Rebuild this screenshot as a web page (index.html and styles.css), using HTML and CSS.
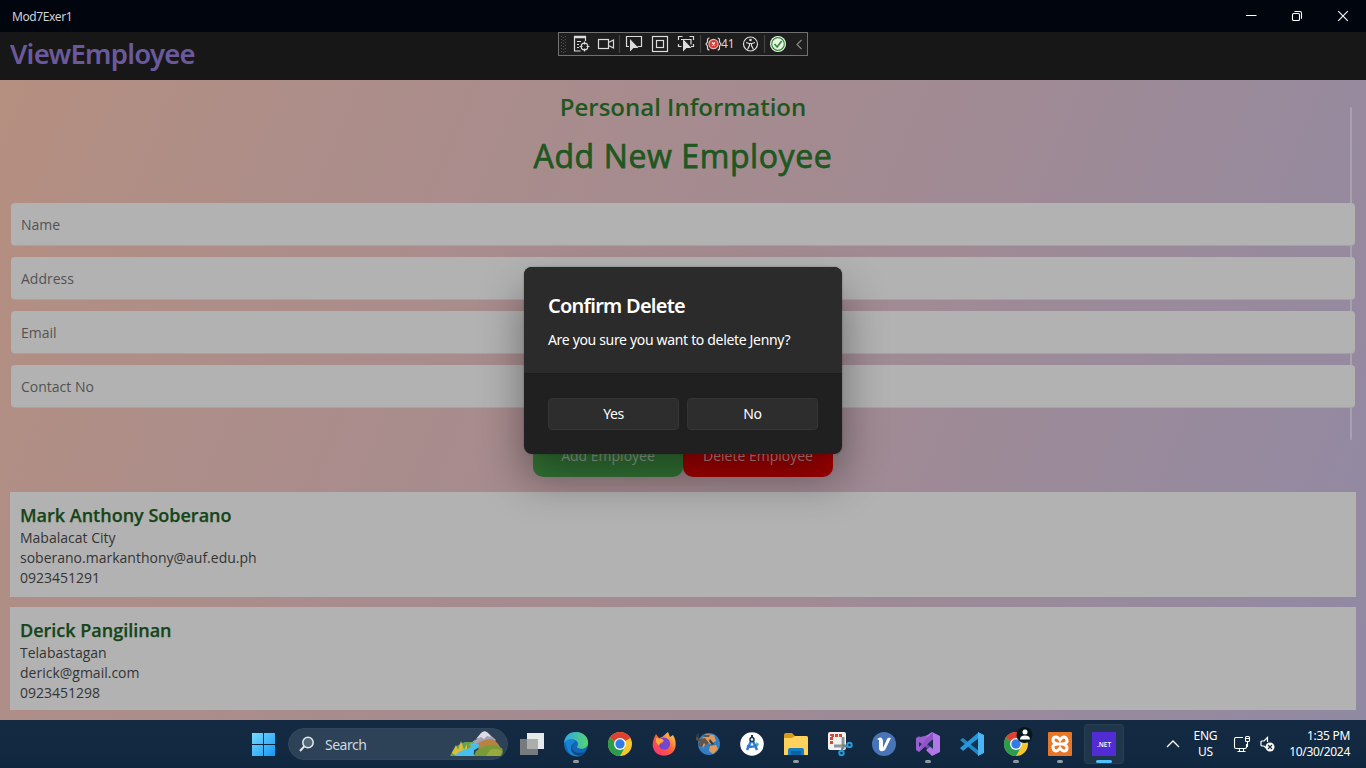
FILE: index.html
```html
<!DOCTYPE html>
<html lang="en">
<head>
<meta charset="utf-8">
<title>Mod7Exer1</title>
<link rel="stylesheet" href="styles.css">
</head>
<body>
<div class="desktop">
  <header class="titlebar">
    <span class="app-name">Mod7Exer1</span>
    <svg class="window-controls" width="138" height="32" viewBox="0 0 138 32" fill="none" stroke="#fff" stroke-width="1.1">
      <path d="M18 15.5h10.5M110.200 11.2l9.6 9.6M119.800 11.2l-9.6 9.6"/>
      <rect x="64.5" y="13.5" width="7" height="7" rx="1.3"/>
      <path d="M66.5 11.5h5.3q1.7 0 1.7 1.7v5.6"/>
    </svg>
  </header>
  <div class="navbar"><h1 class="nav-title">ViewEmployee</h1></div>

  <main class="page">
    <h2 class="section-title">Personal Information</h2>
    <h3 class="form-title">Add New Employee</h3>
    <div class="fields">
      <div class="field"><span>Name</span></div>
      <div class="field"><span>Address</span></div>
      <div class="field"><span>Email</span></div>
      <div class="field"><span>Contact No</span></div>
    </div>
    <div class="actions">
      <div class="action add"><span>Add Employee</span></div>
      <div class="action delete"><span>Delete Employee</span></div>
    </div>
    <div class="cards">
      <article class="card first">
        <h4><span>Mark Anthony Soberano</span></h4>
        <p><span>Mabalacat City</span></p><p><span>soberano.markanthony@auf.edu.ph</span></p><p><span>0923451291</span></p>
      </article>
      <article class="card">
        <h4><span>Derick Pangilinan</span></h4>
        <p><span>Telabastagan</span></p><p><span>derick@gmail.com</span></p><p><span>0923451298</span></p>
      </article>
    </div>
    <i class="scroll-thumb"></i>
  </main>

  <div class="debug-toolbar">
    <svg width="250" height="24" viewBox="0 0 250 24" fill="none" stroke="#dcdcdc" stroke-width="1.2">
      <rect x=".5" y=".5" width="249" height="23" fill="#1e1e1e" stroke="#707070" stroke-width="1"/>
      <path d="M3.5 4v17M5.5 5v16M7.500 4v17" stroke="#555" stroke-dasharray="1 2" stroke-width="1"/>
      <path d="M16.500 4v15h6M27.500 4v5M19 9.500h4M19 12.500h2M19 15.500h2"/><path d="M16 5h12" stroke-width="2.500"/>
      <circle cx="26.500" cy="14.500" r="3.300"/><path d="M26.500 9.500v3M26.500 16.500v3M21.500 14.500h3M28.500 14.500h3"/>
      <rect x="40.500" y="7.500" width="10" height="9"/><path d="M50.500 10.500l5-2.500v8l-5-2.500"/>
      <path d="M61.500 3v18M142.500 3v18M206.500 3v18" stroke="#444"/>
      <path d="M71 14.500h-2.500v-10h15v10h-4"/><path d="M72 7v12.500l3.500-3.500h5z" fill="#dcdcdc" stroke="none"/>
      <rect x="94.500" y="4.500" width="15" height="15"/><rect x="98.500" y="8.500" width="7" height="7"/>
      <path d="M120.500 8V4.500h4M131.500 4.500h4V8M135.500 12v2.500H133M120.500 12v2.500h3M123 7.500h10v5"/><path d="M125 7v12.500l3.500-3.500h5z" fill="#dcdcdc" stroke="none"/>
      <path d="M151.500 6q-2 0-2 2v2l-1.500 2 1.500 2v2q0 2 2 2M159.500 6q2 0 2 2v2l1.500 2-1.500 2v2q0 2-2 2"/>
      <circle cx="155.500" cy="12" r="4.600" fill="#d83b32" stroke="#efb1aa"/><path d="M154 10.500l3 3m0-3l-3 3" stroke="#fff"/>
      <circle cx="192.500" cy="12" r="7"/><circle cx="192.500" cy="8" r="1.300" fill="#dcdcdc" stroke="none"/><path d="M188 10.500l3 1h3l3-1M191.500 11.500v2l-2 4M193.500 11.500v2l2 4"/>
      <circle cx="220" cy="12" r="8" fill="#e9f5e9" stroke="none"/><circle cx="220" cy="12" r="6.300" stroke="#388a34"/><path d="M216.500 12l2.700 3 4.500-6" stroke="#388a34" stroke-width="1.700"/>
      <path d="M243.500 8l-4.500 4.500 4.500 4.500" stroke="#888"/>
    </svg>
    <span class="debug-count">41</span>
  </div>

  <section class="dialog">
    <div class="dialog-body"><h5><span>Confirm Delete</span></h5><p><span>Are you sure you want to delete Jenny?</span></p></div>
    <div class="dialog-buttons"><div>Yes</div><div>No</div></div>
  </section>

  <footer class="taskbar">
    <svg class="start" width="24" height="24" viewBox="0 0 24 24">
      <defs><linearGradient id="win" x1="0" y1="0" x2="1" y2="1"><stop stop-color="#76dcff"/><stop offset="1" stop-color="#1696f4"/></linearGradient></defs>
      <path fill="url(#win)" d="M1 1h11v11H1zM13 1h11v11H13zM1 13h11v11H1zM13 13h11v11H13z"/>
    </svg>
    <div class="search">
      <svg width="18" height="18" viewBox="0 0 18 18" fill="#526779" stroke="#e4e9ed" stroke-width="1.500"><circle cx="10" cy="7.500" r="5.200"/><path d="M6.200 11.300L2 16" stroke-width="2"/></svg>
      <span>Search</span>
      <svg class="landscape" width="54" height="26" viewBox="0 0 54 26">
        <path d="M22 12q3-3 6-4l5-6q3-3 6 0l8 7-7 8H23z" fill="#a4a2b5"/><path d="M27 8l5-6q4-4 8 1l2 3-4-1-3 3-3-2z" fill="#dedbe4"/>
        <path d="M25 14q12-7 18-6 7 3 10 13l-15 3z" fill="#b78242"/><path d="M27 20q12-9 26-3 2 5-1 8H25z" fill="#769b38"/><path d="M41 19q6-3 12 1l-2 5H37z" fill="#98aa3e"/>
        <path d="M1 25q5-12 15-14h9l-8 14z" fill="#67a34b"/><path d="M3 22l4-8 2 5 3-9 3 9 3-6v9L8 25z" fill="#d8bd40"/><path d="M14 25l7-8 1-6 3 6v5z" fill="#a1ae40"/>
        <path d="M6 25q3-5 12-7 7-3 5-4l-4-1q10-2 11 1 0 3-5 5-2 2 1 6z" fill="#48bfec"/>
      </svg>
    </div>
    <div class="apps">
      <div class="app"><svg viewBox="0 0 28 28"><path d="M9 3h17v16H9z" fill="#e7e8e9"/><path d="M2 9h18v16H2z" fill="#777b7d"/><path d="M9 9h11v10H9z" fill="#adadad"/></svg></div>
      <div class="app running"><svg viewBox="0 0 28 28"><defs><linearGradient id="edge"><stop stop-color="#30a5e8"/><stop offset="1" stop-color="#54d66e"/></linearGradient></defs><circle cx="14" cy="14" r="12" fill="#1267b7"/><path d="M2 13C3 5 8 2 14 2c8 0 13 6 12 12-.600 4-6 6-10 4-2-1 0-2 0-4 0-4-8-7-14-1z" fill="url(#edge)"/><path d="M3 12c4-4 9-3 10 0-4 2-4 9 2 11 4 1 7 0 9-2-4 7-12 7-17 2" fill="#1683d4"/><path d="M12 13c-4 4-1 10 5 10 3 0 6-1 7-2-3 5-8 6-12 3-4-3-4-9 0-11z" fill="#17457f"/></svg></div>
      <div class="app"><svg viewBox="0 0 28 28"><g id="chrome-mark"><circle cx="14" cy="14" r="12" fill="#f7c52e"/><path d="M14 14L3.600 8A12 12 0 0 1 24.400 8H14z" fill="#df4033"/><path d="M14 14L3.600 8A12 12 0 0 0 14 26l5-9z" fill="#2b9c4c"/><path d="M14 8h10.400L19 11z" fill="#df4033"/><circle cx="14" cy="14" r="6" fill="#fff"/><circle cx="14" cy="14" r="4.700" fill="#327be6"/></g></svg></div>
      <div class="app"><svg viewBox="0 0 28 28"><defs><linearGradient id="fox" x1="0" y1="1" x2="1" y2="0"><stop stop-color="#f72b7e"/><stop offset=".55" stop-color="#ff6338"/><stop offset="1" stop-color="#ffe451"/></linearGradient></defs><path d="M4 8l2-4 3 4 3-1 6-5 2 5 3-2c5 8 3 18-5 20-10 3-17-5-15-13z" fill="url(#fox)"/><path d="M10 9c5-3 11 0 10 6-1 5-7 6-10 3-2-2-2-4 0-4l3-1z" fill="#7146d4"/><path d="M6 8l6 1 2 2-4 2-1 3-3-4zM17 3l2 6-3-2z" fill="#ffac38"/></svg></div>
      <div class="app"><svg viewBox="0 0 28 28"><circle cx="15" cy="14" r="11" fill="#347ebf"/><path d="M7 10l5-6 8 1 2 6-5 3-5-1-3 5zM16 16l6-1 2 4-5 5-4-3z" fill="#e09a59"/><path d="M3 4l3 5 5-1 4 5-3 2-2-2-2 4-4-2 2-4-4-1zM9 5h7l-1 2h-5z" fill="#65544b"/><path d="M2 5l3-2v7M16 9l4 5-2 1-3-4z" fill="#333b40"/></svg></div>
      <div class="app"><svg viewBox="0 0 28 28"><circle cx="14" cy="14" r="11.800" fill="#fff"/><path d="M14 9L9 20M14 9l5 11M9 16q5 2 10-1" fill="none" stroke="#2d79d9" stroke-width="2.500"/><circle cx="14" cy="9.500" r="2" fill="#fff" stroke="#17354d" stroke-width="1.500"/><path d="M14 5v3" stroke="#17354d" stroke-width="2"/><path d="M18 12l3 2-2 3z" fill="#39ba72"/></svg></div>
      <div class="app running"><svg viewBox="0 0 28 28"><path d="M2 5q0-2 2-2h6l3 3h11q2 0 2 2v6H2z" fill="#d79b17"/><path d="M2 8h8l3-2h11q2 0 2 2v17H2z" fill="#ffd35b"/><path d="M6 25v-5q0-2 2-2h12q2 0 2 2v5z" fill="#167cc1"/><path d="M9 21h10v4H9z" fill="#0f62a1"/></svg></div>
      <div class="app"><svg viewBox="0 0 28 28"><rect x="2" y="2" width="18" height="18" rx="2" fill="#f2f2f1"/><path d="M5.500 14V5.500H16" fill="none" stroke="#d24b31" stroke-width="3" stroke-dasharray="3 1"/><path d="M17 7v12M8 16h12" stroke="#8c969b" stroke-width="3"/><path d="M16 15l7 2M17 17l-2 5" stroke="#737e84" stroke-width="2"/><g fill="none" stroke="#289cdb" stroke-width="2"><circle cx="23.500" cy="15" r="2.200"/><circle cx="15.500" cy="23" r="2.200"/></g></svg></div>
      <div class="app"><svg viewBox="0 0 28 28"><circle cx="14" cy="14" r="12" fill="#4775b5"/><path d="M7 9q5-4 6 2v7l4-9q1-2 4-1l-6 12q-5 3-6-1V10z" fill="#fff"/></svg></div>
      <div class="app running"><svg viewBox="0 0 28 28"><path d="M2 8l3-2 14 12v5L2 10z" fill="#7343b6"/><path d="M2 8v12l3 2L19 9V4z" fill="#9961cf"/><path d="M5 12v5l3-3z" fill="#153450"/><path d="M18 2l8 4v16l-8 4-6-6 7-5v-5l-7-4z" fill="#b276e9"/><path d="M19 9v10l-6-5z" fill="#153450"/><path d="M5 22L19 9V2l-9 9z" fill="#8f54c5"/></svg></div>
      <div class="app"><svg viewBox="0 0 28 28"><path d="M2 10l3-2 16 13v5z" fill="#2387c6"/><path d="M2 18l3 3L21 8V2z" fill="#2699dd"/><path d="M20 2l6 3v18l-6 3z" fill="#4ab5f4"/><path d="M20 9v10l-7-5z" fill="#153450"/></svg></div>
      <div class="app running"><svg viewBox="0 0 28 28"><use href="#chrome-mark"/><circle cx="22.500" cy="5" r="8" fill="#05191d"/><circle cx="23" cy="2" r="2.500" fill="#fff"/><path d="M18 9.500q0-4 5-4t5 4z" fill="#fff"/></svg></div>
      <div class="app running"><svg viewBox="0 0 28 28"><rect x="2" y="2" width="24" height="24" rx="1" fill="#e87627"/><path d="M11 14q-4-1-4-4t3-3q2 0 4 3 2-3 4-3t3 3-4 4q4 1 4 4t-3 3q-2 0-4-3-2 3-4 3t-3-3 4-4zM10.500 14h7" fill="none" stroke="#fff" stroke-width="3"/></svg></div>
      <div class="app active"><svg viewBox="0 0 28 28"><path d="M2 2h24v24H2z" fill="#512bd4"/><text x="14" y="16.500" class="net-text">.NET</text></svg></div>
    </div>
    <div class="tray">
      <svg width="14" height="10" viewBox="0 0 14 10"><path d="M1 8l6-6 6 6" fill="none" stroke="#fff" stroke-width="1.300"/></svg>
      <div class="language"><div>ENG</div><div>US</div></div>
      <svg class="network" width="18" height="18" viewBox="0 0 18 18" fill="none" stroke="#fff" stroke-width="1.100"><path d="M10 2.500H3q-1.500 0-1.500 1.500v8q0 1.500 1.500 1.500h9q1.500 0 1.500-1.500V9M4.500 16.500h8M6.500 13.500v3M10.500 13.500v3"/><rect x="12.500" y="1.500" width="4" height="5" rx="1"/><path d="M14.500 6.500V12M13 3.500h3"/></svg>
      <svg width="18" height="18" viewBox="0 0 18 18" fill="none" stroke="#fff" stroke-width="1.200"><path d="M8.500 7V2.500L5 6H3Q2 6 2 7v3q0 1 1 1h2l2 2"/><circle cx="11" cy="12" r="4.500" fill="#fff" stroke="none"/><path d="M9 10l4 4m0-4l-4 4" stroke="#142b42"/></svg>
      <div class="clock"><div>1:35 PM</div><div>10/30/2024</div></div>
    </div>
  </footer>
</div>
</body>
</html>
```
FILE: styles.css
```css
* { box-sizing: border-box; }
body, h1, h2, h3, h4, h5, p { margin: 0; }
body { width: 1366px; height: 768px; overflow: hidden; font-family: "Noto Sans", sans-serif; }
.desktop { position: relative; height: 768px; display: flex; flex-direction: column; }
.titlebar { height: 32px; background: #00050e; color: #cfd2d6; display: flex; justify-content: space-between; align-items: center; padding-left: 12px; }
.app-name { font-size: 12px; letter-spacing: -.4px; }
.navbar { height: 48px; background: #171717; padding: 1px 10px; }
.nav-title { color: #6a5a9d; font: 600 27.5px/41px "Noto Sans", sans-serif; letter-spacing: -.75px; }
.page { height: 640px; position: relative; padding: 10px 10px; display: flex; flex-direction: column; background: linear-gradient(112deg, #b58f7f 0%, #af8e87 14%, #a88c8d 36%, #a18a93 60%, #988a9d 82%, #9089a3 100%); font-family: "Open Sans", sans-serif; }
.section-title { text-align: center; color: #20571f; font-size: 24px; font-weight: 600; line-height: 34px; }
.form-title { text-align: center; color: #20571f; font-size: 32px; font-weight: 400; -webkit-text-stroke: .75px #20571f; letter-spacing: .6px; line-height: 44px; padding-top: 10px; }
.fields { display: flex; flex-direction: column; gap: 11px; margin: 25px 0 0; padding: 0 1px; }
.field { height: 43px; background: #b2b2b2; border: 0 solid #a6a1a6; border-bottom-width: 1px; border-radius: 4px; padding: 1px 10px; color: #525252; font-size: 14px; line-height: 42px; }
.actions { display: flex; justify-content: center; margin-top: 27px; }
.action { width: 150px; height: 42px; border-radius: 10px; text-align: center; font-size: 14px; line-height: 41px; }
.add { background: #357b38; color: #9eae9b; }
.delete { background: #ae0000; color: #cc9090; }
.cards { display: flex; flex-direction: column; gap: 10px; margin-top: 15px; }
.card { height: 103px; background: #b2b2b2; padding: 11px 10px; color: #343434; }
.card.first { height: 105px; }
.card h4 { color: #154518; font-size: 18px; line-height: 25px; font-weight: 600; -webkit-text-stroke: .25px #154518; }
.card p { font-size: 14px; line-height: 20px; }
.scroll-thumb { position: absolute; z-index: 0; right: 14px; top: 27px; width: 2px; height: 333px; background: #aaa1ae; border-radius: 1px; }
.fields, .actions, .cards { position: relative; z-index: 1; }
.debug-toolbar { position: absolute; left: 558px; top: 32px; width: 250px; height: 24px; }
.debug-toolbar svg { display: block; }
.debug-count { position: absolute; left: 163px; top: 3px; color: #d6d6d6; font-size: 12px; line-height: 17px; }
.dialog { position: absolute; z-index: 3; left: 524px; top: 267px; width: 318px; height: 187px; color: #fff; background: #202020; border-radius: 8px; overflow: hidden; box-shadow: 0 0 2px #2226, 0 24px 44px #0006; }
.dialog-body { height: 107px; background: #2b2b2b; padding: 25px 24px 0; border-bottom: 1px solid #1d1d1d; }
.dialog-body h5 { font: 600 20px/28px "Noto Sans", sans-serif; letter-spacing: -.75px; }
.dialog-body p { font-size: 14px; line-height: 20px; padding-top: 10px; letter-spacing: -.33px; white-space: nowrap; }
.dialog-buttons { display: flex; gap: 8px; padding: 24px; }
.dialog-buttons div { width: 131px; height: 32px; border: 1px solid #353535; background: #2d2d2d; border-radius: 4px; text-align: center; font-size: 14px; line-height: 30px; letter-spacing: -.4px; }
.taskbar { height: 48px; background: linear-gradient(#142a43, #10283f); display: flex; align-items: center; padding-left: 251px; color: #fff; }
.search { margin-left: 13px; width: 220px; height: 32px; border-radius: 16px; background: #2d4257; border: 1px solid #30465a; display: flex; align-items: center; padding-left: 9px; }
.search span { margin-left: 9px; font-size: 14px; color: #d0d8df; letter-spacing: -.5px; width: 125px; flex: none; }
.landscape { margin-left: -1px; flex: none; }
.apps { display: flex; gap: 4px; margin-left: 4px; }
.app { position: relative; width: 40px; height: 40px; border-radius: 4px; padding: 6px; }
.app svg { width: 28px; height: 28px; display: block; overflow: visible; }
.running::after { content: ""; position: absolute; left: 17px; bottom: 1px; width: 6px; height: 3px; border-radius: 2px; background: #929ca5; }
.active { background: #20374b; box-shadow: inset 0 0 0 1px #293f53; }
.active::after { content: ""; position: absolute; left: 12px; bottom: 1px; width: 16px; height: 3px; border-radius: 2px; background: #4dc2ff; }
.net-text { font: 600 6.5px "Open Sans", sans-serif; fill: white; text-anchor: middle; }
.tray { margin-left: auto; margin-right: 16px; display: flex; align-items: center; font-size: 12px; line-height: 16px; letter-spacing: -.3px; }
.language { text-align: center; margin: 0 16px 0 14px; }
.network { margin-right: 8px; }
.clock { text-align: right; margin-left: 12px; }
```
